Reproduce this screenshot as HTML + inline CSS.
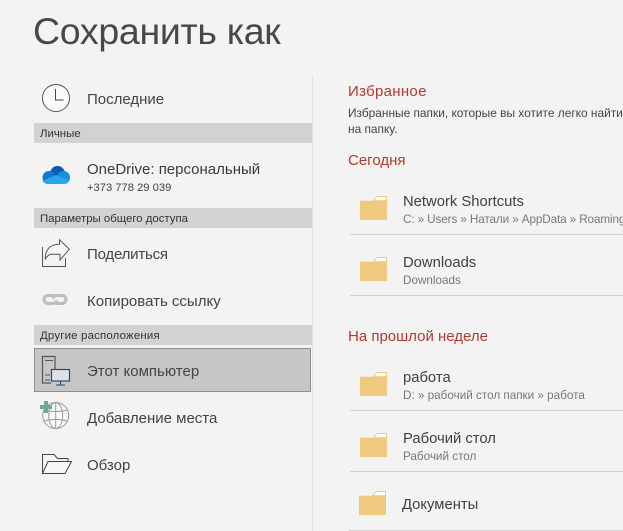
<!DOCTYPE html>
<html lang="ru">
<head>
<meta charset="utf-8">
<title>Сохранить как</title>
<style>
html,body{margin:0;padding:0;width:623px;height:531px;overflow:hidden;background:#f3f3f3}
body{position:relative;font-family:"Liberation Sans",sans-serif;color:#444}
.t{position:absolute;white-space:nowrap;line-height:20px}
.b{position:absolute;left:34px;width:278px;height:20px;background:#d2d2d2}
.n{font-size:15px;left:87px;color:#444}
.s{font-size:11.4px;color:#333;left:40px}
.h{font-size:15px;left:348px;color:#b03a2e}
.f{font-size:14.8px;left:403px;color:#404040}
.p{font-size:11.7px;left:403px;color:#777}
.l{position:absolute;left:350px;width:273px;height:1px;background:#d2d2d2}
svg{position:absolute;overflow:visible}
</style>
</head>
<body>
<div class="t" style="left:33px;top:8px;line-height:46px;font-size:37.5px;color:#484848;letter-spacing:-.3px">Сохранить как</div>

<div style="position:absolute;left:312px;top:76px;width:1px;height:455px;background:#e2e2e2"></div>

<div class="b" style="top:123px"></div>
<div class="b" style="top:208px"></div>
<div class="b" style="top:325px"></div>
<div style="position:absolute;left:34px;top:348px;width:275px;height:42px;background:#c6c6c6;border:1px solid #8f8f8f"></div>

<div class="t s" style="top:124px">Личные</div>
<div class="t s" style="top:209px">Параметры общего доступа</div>
<div class="t s" style="top:326px;letter-spacing:.2px">Другие расположения</div>

<div class="t n" style="top:90px">Последние</div>
<div class="t n" style="top:160px;color:#3a3a3a">OneDrive: персональный</div>
<div class="t" style="left:87px;top:178px;font-size:11.2px;color:#444">+373 778 29 039</div>
<div class="t n" style="top:245px;letter-spacing:-.2px">Поделиться</div>
<div class="t n" style="top:292px">Копировать ссылку</div>
<div class="t n" style="top:362px">Этот компьютер</div>
<div class="t n" style="top:409px">Добавление места</div>
<div class="t n" style="top:456px">Обзор</div>

<!-- clock -->
<svg style="left:42px;top:84px" width="28" height="28" viewBox="0 0 28 28" fill="none">
<circle cx="14" cy="14" r="13.5" fill="#fafafa" stroke="#555" stroke-width="1"/>
<path d="M13.5 5v11h8" stroke="#444" stroke-width="1"/>
</svg>

<!-- onedrive -->
<svg style="left:42px;top:166px" width="28" height="18" viewBox="0 0 28 18">
<circle cx="15.500" cy="7.500" r="7.500" fill="#0a5cb0"/>
<circle cx="7" cy="11.500" r="6.500" fill="#0f78d4"/>
<circle cx="21.500" cy="11.500" r="6.500" fill="#1490df"/>
<rect x="7" y="11" width="14.500" height="7" fill="#1490df"/>
<path d="M6 18C3.500 18 1.500 16.700.7 15L14 9l13.300 5.500C26.700 16.500 24.500 18 22 18z" fill="#28a8ea"/>
</svg>

<!-- share -->
<svg style="left:42px;top:239px" width="29" height="29" viewBox="0 0 29 29" fill="none">
<path d="M.5 8v19.500h23V19" stroke="#555" stroke-width="1"/>
<path d="M17.500.7L27.300 10.300 18 21V15.300H10C7 15.300 5 17 3.300 20 3 16 4 13 6 10 8.500 7 13 5.300 17.500 5.300z" stroke="#555" stroke-width="1" fill="#f5f5f5"/>
</svg>

<!-- link -->
<svg style="left:42px;top:294px" width="27" height="11" viewBox="0 0 27 11" fill="none">
<path d="M12 1.500H6a4 4 0 0 0 0 8h5c2 0 3.500-1 4-3" stroke="#bdbdbd" stroke-width="3"/>
<path d="M14 9.500h6a4 4 0 0 0 0-8h-5c-2 0-3.500 1-4 3" stroke="#bdbdbd" stroke-width="3"/>
</svg>

<!-- computer -->
<svg style="left:42px;top:356px" width="30" height="30" viewBox="0 0 30 30" fill="none">
<path d="M13 13V.5H.5V27H9" stroke="#555" stroke-width="1.200"/>
<path d="M3 4.500h8M3 19h5M3 24h5" stroke="#555" stroke-width="1"/>
<rect x="9.500" y="13.500" width="18" height="11.500" fill="#dfe1e3" stroke="#1f4e79" stroke-width="1.200"/>
<path d="M18.500 25.500V29M14 29h9" stroke="#1f4e79" stroke-width="1"/>
</svg>

<!-- globe -->
<svg style="left:40px;top:401px" width="30" height="30" viewBox="0 0 30 30" fill="none">
<g stroke="#9a9a9a" stroke-width="1">
<circle cx="15.700" cy="14.500" r="13" fill="#f8f8f8"/>
<ellipse cx="15.700" cy="14.500" rx="7" ry="13"/>
<path d="M15.700 1.500v26M4 9c7 2 16 2 23.500 0M4 20c7-2 16-2 23.500 0"/>
</g>
<path d="M4 0h4v4H12v4H8v4H4V8H0V4h4z" fill="#6fa89c"/>
</svg>

<!-- browse folder -->
<svg style="left:42px;top:454px" width="30" height="20" viewBox="0 0 30 20" fill="none" stroke="#444" stroke-width="1">
<path d="M.5 19.500V.5H12l3.500 4H26v3"/>
<path d="M.5 19.500H23l6.500-12H6z" fill="#f6f6f6"/>
</svg>

<!-- right -->
<div class="t h" style="top:82px;letter-spacing:.3px">Избранное</div>
<div class="t" style="left:348px;top:105px;font-size:11.9px;line-height:16px;color:#444">Избранные папки, которые вы хотите легко найти</div>
<div class="t" style="left:348px;top:121px;font-size:11.9px;line-height:16px;color:#444">на папку.</div>
<div class="t h" style="top:151px">Сегодня</div>
<div class="t h" style="top:327px">На прошлой неделе</div>

<div class="t f" style="top:192px">Network Shortcuts</div>
<div class="t p" style="top:210px;letter-spacing:-.1px">C: » Users » Натали » AppData » Roaming</div>
<div class="l" style="top:234px"></div>
<div class="t f" style="top:253px">Downloads</div>
<div class="t p" style="top:271px">Downloads</div>
<div class="l" style="top:295px"></div>
<div class="t f" style="top:368px">работа</div>
<div class="t p" style="top:386px">D: » рабочий стол папки » работа</div>
<div class="l" style="top:410px"></div>
<div class="t f" style="top:429px">Рабочий стол</div>
<div class="t p" style="top:447px">Рабочий стол</div>
<div class="l" style="top:471px"></div>
<div class="t f" style="top:495px;left:402px">Документы</div>
<div class="l" style="top:530px;left:349px;width:274px"></div>

<svg width="0" height="0" style="position:absolute"><defs>
<g id="fd"><path d="M13.500 4.700L17 .5H26.500V4.700z" fill="#fffdf6" stroke="#efc97f" stroke-width="1"/><path d="M0 4.700H27V24H0z" fill="#efc97f"/></g>
</defs></svg>
<svg style="left:360px;top:196px" width="27" height="24"><use href="#fd"/></svg>
<svg style="left:360px;top:257px" width="27" height="24"><use href="#fd"/></svg>
<svg style="left:360px;top:372px" width="27" height="24"><use href="#fd"/></svg>
<svg style="left:360px;top:433px" width="27" height="24"><use href="#fd"/></svg>
<svg style="left:359px;top:491px" width="27" height="24"><use href="#fd"/></svg>
</body>
</html>
